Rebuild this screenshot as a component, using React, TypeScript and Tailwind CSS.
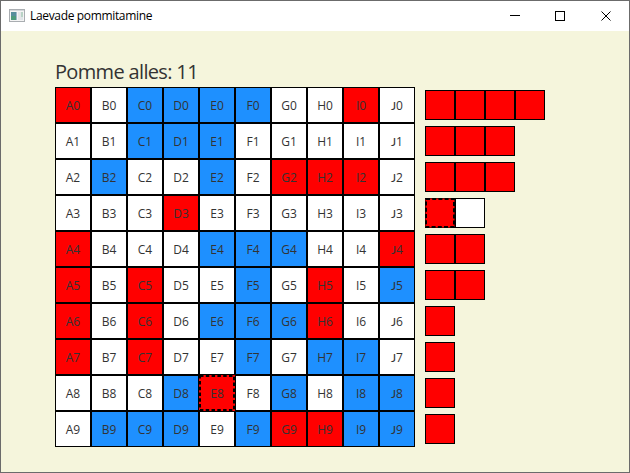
import React from "react";

const BOARD = [
  "RWBBBBWWRW",
  "WWBBBWWWWW",
  "WBWWBWRRRW",
  "WWWRWWWWWW",
  "RWWWBBBWWR",
  "RWRWWBWRWB",
  "RWRWBBBRWW",
  "RWRWWBWBBW",
  "WWWBDWBWBB",
  "WBBBWBRRBB",
];

const SHIPS = ["RRRR", "RRR", "RRR", "DW", "RR", "RR", "R", "R", "R", "R"];

const FILL: Record<string, string> = {
  R: "bg-[#ff0000]",
  D: "bg-[#ff0000]",
  W: "bg-white",
  B: "bg-[#1e90ff]",
};

function Dashes({ size, dash }: { size: number; dash: string }) {
  return (
    <svg className="absolute left-0 top-0" width={size} height={size}>
      <rect x="1" y="1" width={size - 2} height={size - 2} fill="none" stroke="#000" strokeWidth="2" strokeDasharray={dash} />
    </svg>
  );
}

function Cell({ kind, column, row }: { kind: string; column: string; row: number }) {
  return (
    <div className={`relative flex size-9 items-center justify-center ${kind === "D" ? "" : "border border-black"} ${FILL[kind]}`}>
      {kind === "D" && <Dashes size={36} dash="3.5 2.3" />}
      <span className="relative top-px text-[12px] leading-4 text-[#333333]">
        <span className={column === "J" ? "font-['Lato']" : ""}>{column}</span>
        {row}
      </span>
    </div>
  );
}

function Ship({ parts }: { parts: string }) {
  return (
    <div className="flex h-[30px]">
      {parts.split("").map((kind, i) => (
        <div key={i} className={`relative size-[30px] ${kind === "D" ? "z-10" : "border border-black"} ${FILL[kind]}`}>
          {kind === "D" && (
            <>
              <div className="absolute inset-0 border border-black/50" />
              <Dashes size={30} dash="4 2.2" />
            </>
          )}
        </div>
      ))}
    </div>
  );
}

function TitleBar() {
  return (
    <header className="flex h-[30px] items-center bg-white pl-2">
      <svg width="16" height="14" viewBox="0 0 16 14" shapeRendering="crispEdges">
        <rect x="0.5" y="0.5" width="15" height="12" fill="#f4f4f4" stroke="#a9adb1" />
        <rect x="1" y="1" width="14" height="1" fill="#d3d7da" />
        <rect x="2" y="3" width="6" height="8" fill="#568e9c" />
        <rect x="2" y="7" width="5" height="4" fill="#4c9a7c" />
        <rect x="7" y="3" width="1" height="8" fill="#9fb7c8" />
        <rect x="9" y="3" width="3" height="8" fill="#e4e6e8" />
        <rect x="12" y="3" width="2" height="5" fill="#b9d3c6" />
        <rect x="12" y="8" width="2" height="3" fill="#dfe5e8" />
      </svg>
      <h1 className="ml-[5px] flex-1 whitespace-nowrap text-[12px] leading-4 tracking-[-0.34px] text-black">Laevade pommitamine</h1>
      <svg className="mr-[15px]" width="105" height="12" viewBox="0 0 105 12" fill="none" stroke="#000">
        <path d="M1 5.5h10" shapeRendering="crispEdges" />
        <rect x="46.5" y="1.5" width="9" height="9" shapeRendering="crispEdges" />
        <path d="M92.5 1.5l9 9M101.5 1.5l-9 9" />
      </svg>
    </header>
  );
}

export default function App() {
  return (
    <div className="flex h-[473px] w-[630px] flex-col overflow-hidden border border-[#6b6b6b] bg-[#f5f5dc] font-['Open_Sans','Noto_Sans',sans-serif]">
      <TitleBar />
      <main className="pl-[54px] pt-[27px]">
        <p className="h-[29px] whitespace-nowrap text-[20px] leading-7 tracking-[-0.66px] text-[#333333]">Pomme alles: 11</p>
        <div className="flex gap-[10px]">
          <div className="grid grid-cols-[repeat(10,36px)]">
            {BOARD.map((cells, y) =>
              cells.split("").map((kind, x) => <Cell key={`${x}-${y}`} kind={kind} column={"ABCDEFGHIJ"[x]} row={y} />),
            )}
          </div>
          <div className="flex flex-col gap-1.5 pt-[3px]">
            {SHIPS.map((parts, i) => (
              <Ship key={i} parts={parts} />
            ))}
          </div>
        </div>
      </main>
    </div>
  );
}
